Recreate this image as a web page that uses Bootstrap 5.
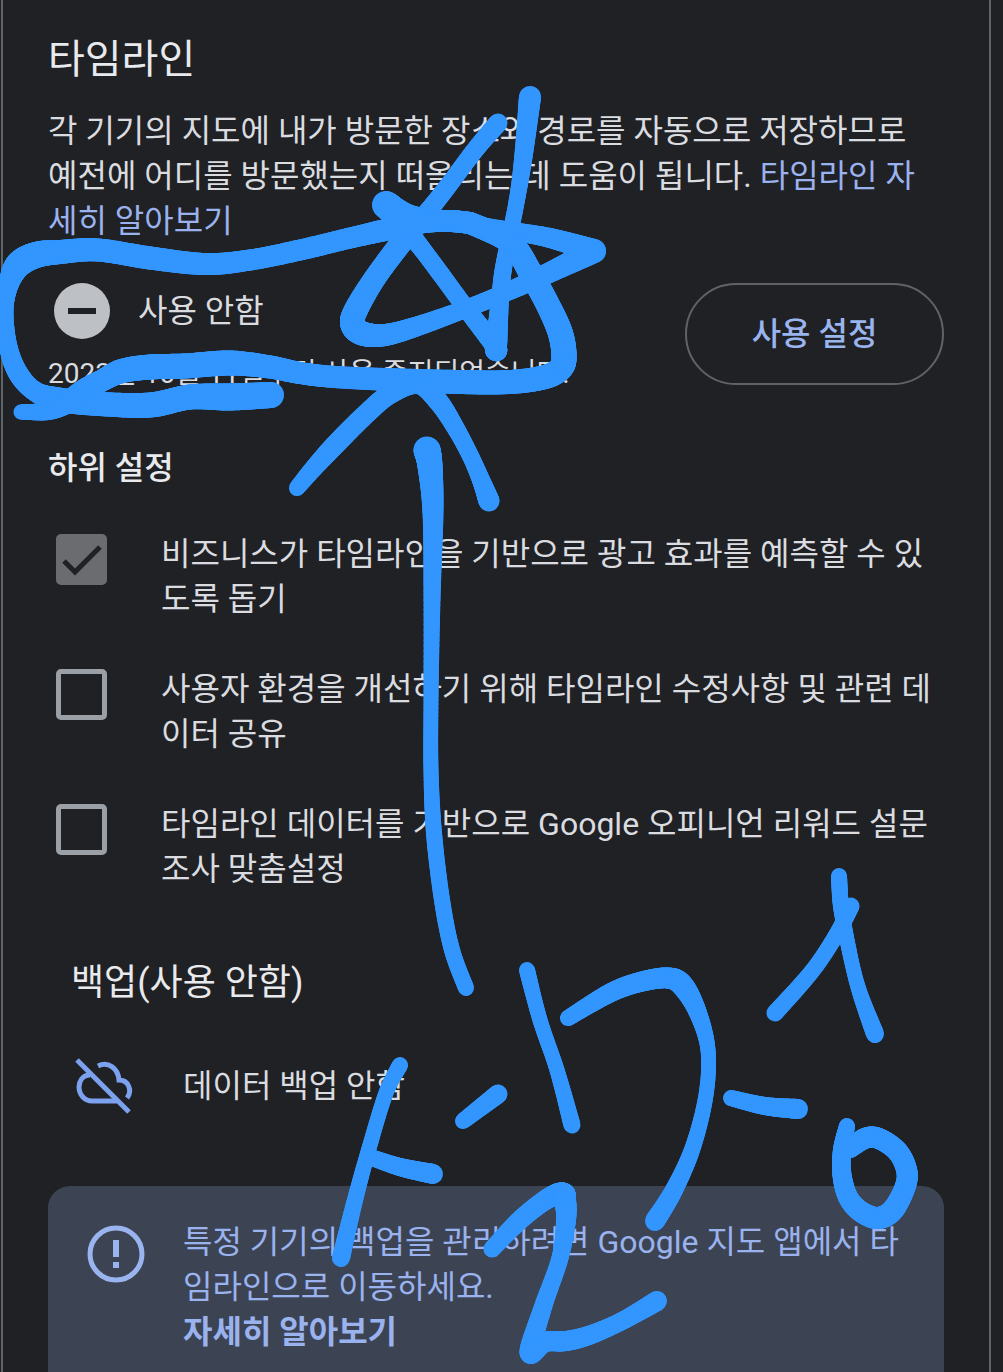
<!DOCTYPE html>
<html lang="ko">
<head>
<meta charset="utf-8">
<meta name="viewport" content="width=device-width, initial-scale=1">
<title>타임라인</title>
<link href="https://cdn.jsdelivr.net/npm/bootstrap@5.3.0/dist/css/bootstrap.min.css" rel="stylesheet">
<style>
body { background: #202124; color: #dadce0; font-family: Roboto, "Noto Sans CJK KR", sans-serif; font-size: 32px; line-height: 45px; }
.page-view { height: 100vh; min-height: 1372px; overflow: hidden; }
.timeline-panel { margin: 0 12px 0 1px; padding: 33px 45px 0 45px; border: 2px solid #5f6368; border-width: 0 2px; min-height: 100%; }
.panel-title { font-size: 40px; line-height: 54px; color: #e8eaed; font-weight: 400; }
.panel-copy { margin-top: 22px; margin-bottom: 39px; }
.blue-link, .blue-link:hover { color: #9ab2ee; text-decoration: none; }
.status-icon { width: 56px; height: 56px; flex: none; }
.status-line { gap: 28px; padding-left: 6px; }
.status-date { font-size: 28px; line-height: 40px; margin-top: 15px; white-space: nowrap; }
.enable-btn, .enable-btn:hover { width: 259px; height: 102px; border: 2px solid #5f6368; color: #9ab4f0; background: transparent; font-size: 32px; font-weight: 500; }
.sub-title { font-size: 32px; line-height: 45px; font-weight: 500; color: #e8eaed; margin-top: 52px; margin-bottom: 41px; }
.option-list { gap: 45px; padding-left: 8px; }
.option-row { gap: 54px; }
.option-row .form-check-input { width: 51px; height: 51px; margin: 2px 0 0; flex: none; border: 5px solid #9aa0a6; border-radius: 5px; background-color: transparent; }
.option-row .form-check-input:checked { border-color: #6b6c6f; background-color: #6b6c6f; background-origin: border-box; background-size: 51px 51px; background-image: url("data:image/svg+xml,%3Csvg xmlns='http://www.w3.org/2000/svg' viewBox='0 0 51 51'%3E%3Cpath d='M8 27l11 11 25-25' fill='none' stroke='%23202124' stroke-width='5'/%3E%3C/svg%3E"); }
.backup-title { font-size: 36px; line-height: 48px; font-weight: 400; color: #e8eaed; margin: 67px 0 0 23px; }
.backup-row { padding-left: 24px; gap: 47px; margin-top: 47px; }
.row-icon { width: 64px; height: 64px; flex: none; }
.info-box { margin-top: 68px; background: #3c4454; color: #9ab2ee; border-radius: 22px; padding: 34px 32px 48px 36px; gap: 35px; }
.ink-layer { position: absolute; left: 0; top: 0; width: 1003px; height: 1372px; pointer-events: none; }
</style>
</head>
<body>
<div class="page-view position-relative">
<main class="timeline-panel">
  <h1 class="panel-title mb-0">타임라인</h1>
  <p class="panel-copy">각 기기의 지도에 내가 방문한 장소와 경로를 자동으로 저장하므로<br>예전에 어디를 방문했는지 떠올리는 데 도움이 됩니다. <a class="blue-link" href="#">타임라인 자<br>세히 알아보기</a></p>
  <div class="d-flex justify-content-between align-items-start">
    <div>
      <div class="status-line d-flex align-items-center">
        <svg class="status-icon" viewBox="0 0 56 56" aria-hidden="true"><circle cx="28" cy="28" r="28" fill="#bdc1c6"/><path d="M14 28h28" stroke="#202124" stroke-width="6"/></svg>
        <span>사용 안함</span>
      </div>
      <div class="status-date">2023년 10월 11일부터 사용 중지되었습니다.</div>
    </div>
    <button type="button" class="btn enable-btn rounded-pill flex-shrink-0">사용 설정</button>
  </div>

  <h2 class="sub-title">하위 설정</h2>
  <div class="option-list d-flex flex-column">
    <div class="option-row d-flex align-items-start">
      <input class="form-check-input" type="checkbox" id="optAds" checked>
      <label for="optAds">비즈니스가 타임라인을 기반으로 광고 효과를 예측할 수 있<br>도록 돕기</label>
    </div>
    <div class="option-row d-flex align-items-start">
      <input class="form-check-input" type="checkbox" id="optShare">
      <label for="optShare">사용자 환경을 개선하기 위해 타임라인 수정사항 및 관련 데<br>이터 공유</label>
    </div>
    <div class="option-row d-flex align-items-start">
      <input class="form-check-input" type="checkbox" id="optSurvey">
      <label for="optSurvey">타임라인 데이터를 기반으로 Google 오피니언 리워드 설문<br>조사 맞춤설정</label>
    </div>
  </div>

  <h2 class="backup-title">백업(사용 안함)</h2>
  <div class="backup-row d-flex align-items-center">
    <svg class="row-icon" viewBox="0 0 64 64" fill="none" stroke="#7ba1ef" stroke-width="5" aria-hidden="true">
      <path d="M5 6l52 52"/>
      <path d="M18 21C10 21 7 28 7 33c0 8 6 14 13 14h25"/>
      <path d="M26 12C36 7 46 14 47 26c9 0 14 10 8 18"/>
    </svg>
    <span>데이터 백업 안함</span>
  </div>

  <section class="info-box d-flex align-items-start">
    <svg class="row-icon" viewBox="0 0 64 64" fill="none" stroke="#9ab4f0" aria-hidden="true"><circle cx="32" cy="34" r="26" stroke-width="5"/><path d="M32 20v17M32 42v6" stroke-width="6"/></svg>
    <div>특정 기기의 백업을 관리하려면 Google 지도 앱에서 타<br>임라인으로 이동하세요.<br><a class="blue-link fw-bold" href="#">자세히 알아보기</a></div>
  </section>
</main>
<svg class="ink-layer" id="ink" viewBox="0 0 1003 1372" stroke="#3396ff" stroke-linecap="round" aria-hidden="true"></svg>
</div>
<script>
// Pen strokes: each point is x, y, pen width.
const strokes = [
  // star
  [[498,123,19],[475,150,18],[448,186,18],[425,215,19],[405,238,22],[375,278,22],[355,312,24],[353,326,24],[364,334,24],[385,335,22],[415,327,20],[460,311,18],[500,295,18],[540,277,20],[594,251,24]],
  [[594,251,24],[550,238,20],[505,230,18],[450,221,18],[410,216,22],[386,205,28]],
  [[386,205,27],[415,240,19],[440,273,18],[465,307,18],[494,344,20],[496,346,22],[500,300,18],[504,265,17],[516,205,16],[523,160,18],[530,97,22]],
  // loop round the status line
  [[470,223,22],[450,221,22],[425,222,22],[390,229,22],[350,238,21],[300,250,21],[250,260,21],[205,264,22],[150,258,23],[98,250,23],[60,252,24],[36,255,26],[18,265,26],[9,284,20],[6,310,15],[8,345,18],[18,373,20],[36,392,20],[62,400,24],[100,404,24],[150,405,25],[190,397,25],[230,397,27],[271,395,26]],
  [[21,412,15],[48,411,18],[68,402,22],[85,390,23],[103,380,22],[122,371,24],[150,367,25],[185,366,25],[230,363,25],[270,367,23],[300,373,22],[335,377,22],[400,380,23],[460,382,24],[510,382,24],[545,377,24],[561,368,24],[564,355,25],[560,332,25],[547,303,24],[530,272,24],[516,248,23],[500,236,23],[470,223,22]],
  // arrow
  [[297,488,16],[313,469,18],[335,445,20],[365,415,20],[390,394,20],[418,384,20],[438,401,20],[455,427,18],[470,455,17],[481,480,18],[489,501,21]],
  [[427,450,27],[430,466,25],[433,513,21],[432,600,17],[431,700,15],[431,770,15],[434,833,16],[442,900,16],[452,950,16],[466,988,16]],
  // handwritten word
  [[400,1065,16],[386,1093,15],[370,1145,15],[355,1200,16],[341,1258,18]],
  [[370,1157,16],[400,1167,18],[433,1174,20]],
  [[463,1121,16],[498,1094,19]],
  [[527,970,16],[540,1020,15],[557,1070,15],[572,1125,17]],
  [[568,1018,16],[610,993,19],[640,982,20],[668,978,21],[683,986,22],[698,1013,18],[708,1050,15],[706,1095,15],[693,1147,16],[674,1190,18],[655,1221,20]],
  [[492,1249,17],[520,1220,19],[547,1199,20],[562,1194,23],[565,1200,22],[566,1220,20],[560,1258,17],[543,1307,18],[530,1352,21],[545,1342,20],[566,1341,20],[590,1335,19],[622,1321,18],[657,1301,20]],
  [[839,876,16],[841,906,16],[847,940,15],[858,987,15],[875,1034,18]],
  [[851,906,17],[838,932,16],[813,970,16],[775,1013,17]],
  [[731,1098,16],[765,1106,18],[798,1109,20]],
  [[847,1126,16],[842,1150,18],[842,1175,19],[848,1197,20],[860,1211,21],[877,1218,22],[892,1211,22],[904,1190,21],[907,1172,21],[898,1152,21],[880,1139,21],[866,1138,21],[850,1148,20]]
];
const ink = document.getElementById('ink');
const spline = (a, b, c, d, t) => 0.5 * (2*b + (c-a)*t + (2*a-5*b+4*c-d)*t*t + (3*b-a-3*c+d)*t*t*t);
strokes.forEach(pts => {
  const g = document.createElementNS('http://www.w3.org/2000/svg', 'g');
  for (let i = 0; i < pts.length - 1; i++) {
    const q = [pts[Math.max(i-1, 0)], pts[i], pts[i+1], pts[Math.min(i+2, pts.length-1)]];
    let prev = pts[i];
    for (let s = 1; s <= 20; s++) {
      const p = [0, 1, 2].map(k => spline(q[0][k], q[1][k], q[2][k], q[3][k], s/20));
      const line = document.createElementNS('http://www.w3.org/2000/svg', 'line');
      line.setAttribute('x1', prev[0]); line.setAttribute('y1', prev[1]);
      line.setAttribute('x2', p[0]); line.setAttribute('y2', p[1]);
      line.setAttribute('stroke-width', p[2]);
      g.appendChild(line);
      prev = p;
    }
  }
  ink.appendChild(g);
});
</script>
<script src="https://cdn.jsdelivr.net/npm/bootstrap@5.3.0/dist/js/bootstrap.bundle.min.js"></script>
</body>
</html>
